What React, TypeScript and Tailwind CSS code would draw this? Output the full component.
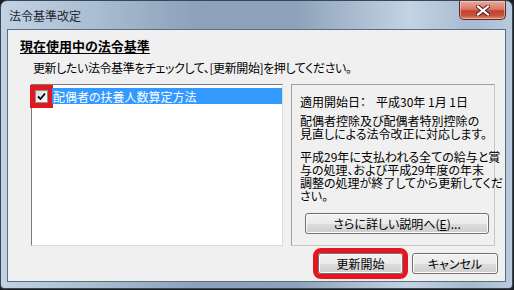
import React from "react";

const jp = "font-['Noto_Sans_CJK_JP','Noto_Sans',sans-serif] [font-feature-settings:'palt']";

const CloseButton = () => (
  <div className="mr-[6px] flex h-[19px] w-[47px] items-center justify-center rounded-b-[5px] border border-t-0 border-[#5a2a24] bg-[linear-gradient(to_bottom,#e9aa9c_0%,#d87a68_45%,#c2412f_55%,#c9503c_80%,#e08a70_100%)] shadow-[inset_0_0_0_1px_rgba(255,220,210,0.5)]">
    <svg width="14" height="11" viewBox="0 0 14 11">
      <path d="M2 1.5 L12 9.5 M12 1.5 L2 9.5" stroke="#4a1a14" strokeWidth="4" strokeLinecap="square" />
      <path d="M2 1.5 L12 9.5 M12 1.5 L2 9.5" stroke="#ffffff" strokeWidth="2.2" strokeLinecap="square" />
    </svg>
  </div>
);

const WinButton = ({ children, className = "" }: { children: React.ReactNode; className?: string }) => (
  <div
    className={`flex h-[21px] items-center justify-center rounded-[3px] border border-[#707070] bg-[linear-gradient(to_bottom,#f2f2f2_0%,#ebebeb_50%,#dddddd_51%,#cfcfcf_100%)] shadow-[inset_0_0_0_1px_#fcfcfc] text-[12px] leading-[13px] text-black ${className}`}
  >
    {children}
  </div>
);

const CheckBox = () => (
  <div className="flex h-[13px] w-[13px] shrink-0 items-center justify-center border border-[#8f8f8f] bg-[linear-gradient(135deg,#dcdcdc,#ffffff)] outline-[5px] outline-solid outline-[#e4161f]">
    <svg width="9" height="9" viewBox="0 0 9 9">
      <path d="M1 4.5 L3.5 7 L8 1.5" fill="none" stroke="#000" strokeWidth="1.8" />
    </svg>
  </div>
);

export default function App() {
  return (
    <div className={`h-[290px] w-[514px] overflow-hidden bg-[#1b1f24] ${jp}`}>
      <div className="flex h-[289px] w-[513px] flex-col rounded-t-[7px] rounded-b-[4px] border border-[#3b4653] bg-[linear-gradient(to_right,#c2d2e4_0%,#a9bed3_18%,#8ca2ba_38%,#8ea3bb_58%,#c3d3e4_80%,#a6bad0_92%,#b9cade_100%)]">
        {/* title bar */}
        <div className="flex h-[28px] shrink-0 items-start justify-between">
          <div className="pl-[8px] pt-[8px] text-[12px] leading-[13px] text-[#1e2630]">法令基準改定</div>
          <CloseButton />
        </div>

        {/* client area */}
        <div className="mx-[6px] flex h-[253px] flex-col border border-[#5d6d80] bg-[#f0f0f0]">
          <div className="ml-[12px] mt-[9px] text-[13px] font-bold leading-[14px] text-black underline underline-offset-2">
            現在使用中の法令基準
          </div>
          <div className="ml-[25px] mt-[8px] text-[12px] leading-[13px] tracking-[-0.4px] text-black">
            更新したい法令基準をチェックして、[更新開始]を押してください。
          </div>

          <div className="ml-[23px] mt-[10px] flex h-[162px] gap-[8px]">
            {/* list box */}
            <div className="w-[252px] border border-t-[#7a7a7a] border-l-[#7a7a7a] border-r-[#dadada] border-b-[#dadada] bg-white">
              <div className="mt-[3px] flex items-center">
                <div className="ml-[3px] mr-[4px]">
                  <CheckBox />
                </div>
                <div className="flex h-[16px] flex-1 items-center bg-[#3399ff] pl-[1px] text-[12px] leading-[13px] text-white">
                  配偶者の扶養人数算定方法
                </div>
              </div>
            </div>

            {/* info box */}
            <div className="flex w-[204px] flex-col border border-t-[#a0a0a0] border-l-[#a0a0a0] border-r-[#c8c8c8] border-b-[#c8c8c8] pl-[8px] pt-[10px] text-[12px] leading-[13px] text-black">
              <div className="whitespace-nowrap">
                適用開始日：<span className="ml-[10px]">平成30年 1月 1日</span>
              </div>
              <div className="mt-[6px] whitespace-nowrap">
                配偶者控除及び配偶者特別控除の
                <br />
                見直しによる法令改正に対応します。
              </div>
              <div className="mt-[10px] whitespace-nowrap">
                平成29年に支払われる全ての給与と賞
                <br />
                与の処理、および平成29年度の年末
                <br />
                調整の処理が終了してから更新してくだ
                <br />
                さい。
              </div>
              <WinButton className="ml-[5px] mt-[11px] w-[184px]">
                さらに詳しい説明へ(<span className="underline">E</span>)...
              </WinButton>
            </div>
          </div>

          <div className="mt-[7px] flex justify-end gap-[9px] pr-[7px]">
            <WinButton className="w-[85px] outline-[5px] outline-solid outline-[#e4161f]">更新開始</WinButton>
            <WinButton className="w-[86px]">キャンセル</WinButton>
          </div>
        </div>
      </div>
    </div>
  );
}
